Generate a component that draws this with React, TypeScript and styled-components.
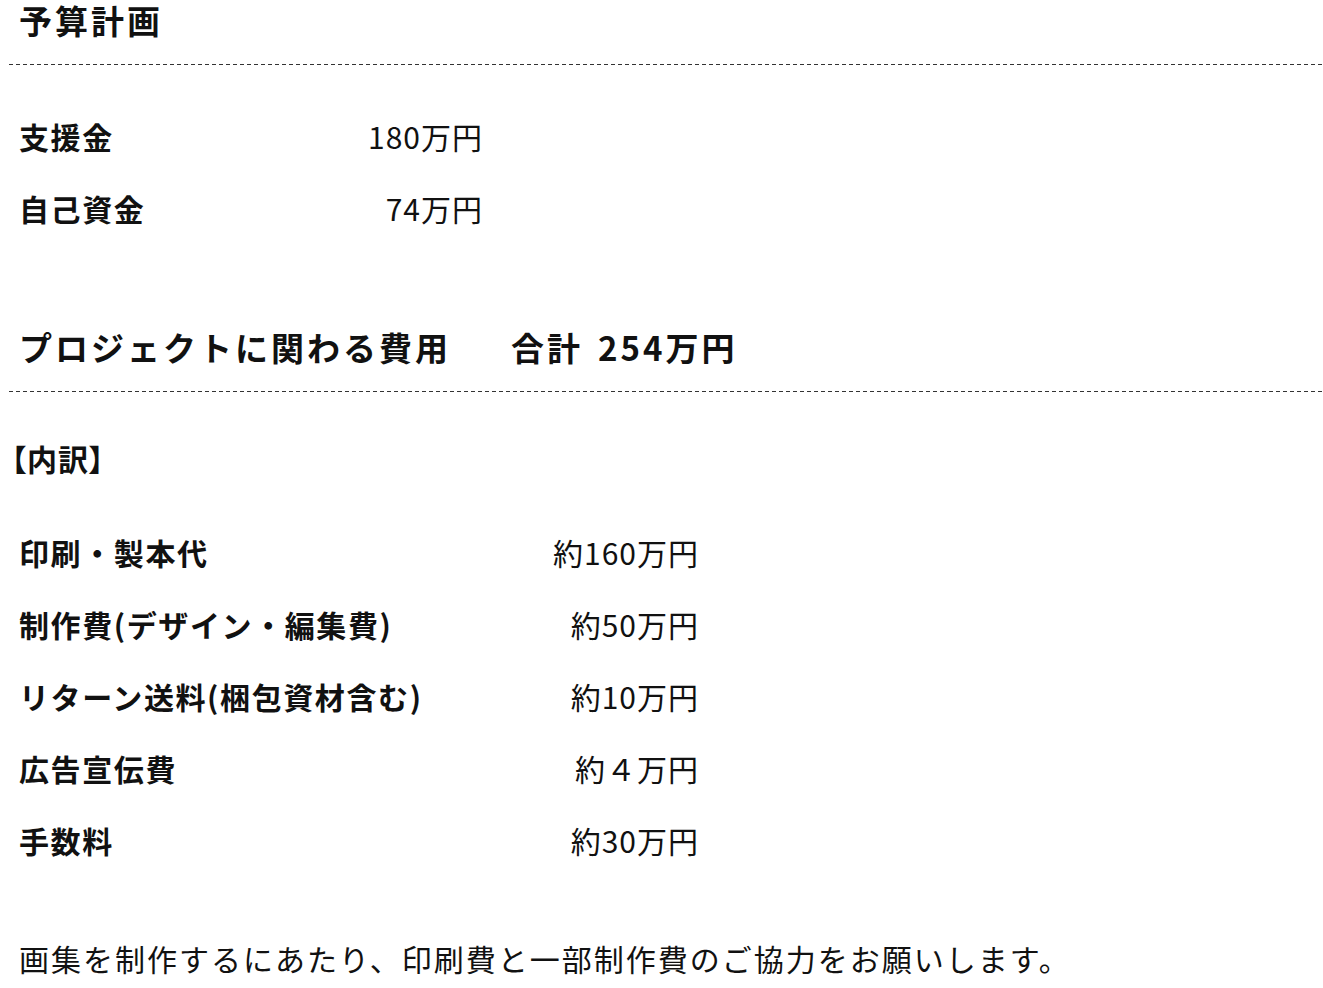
import React from "react";
import styled, { createGlobalStyle } from "styled-components";

const GlobalStyle = createGlobalStyle`
  html, body {
    margin: 0;
    padding: 0;
    background: #ffffff;
    overflow: hidden;
  }
  body {
    font-family: "Noto Sans CJK JP", "Noto Sans", sans-serif;
    color: #111111;
  }
`;

const Page = styled.div`
  padding-left: 9px;
  display: flex;
  flex-direction: column;
`;

const SectionTitle = styled.h2<{ $top?: number }>`
  margin: ${(p) => p.$top ?? 0}px 0 0;
  padding: 0 0 25px 10px;
  height: 40px;
  line-height: 40px;
  font-size: 33px;
  font-weight: 700;
  letter-spacing: 3px;
  background-image: repeating-linear-gradient(
    to right,
    #333333 0 4px,
    transparent 4px 7px
  );
  background-size: 100% 1px;
  background-position: left bottom;
  background-repeat: no-repeat;
  display: flex;
  align-items: center;
`;

const TotalLabel = styled.span`
  margin-left: 60px;
`;

const TotalAmount = styled.span`
  margin-left: 15px;
`;

const Table = styled.div<{ $width: number; $top: number }>`
  width: ${(p) => p.$width}px;
  margin-top: ${(p) => p.$top}px;
  padding-left: 10px;
  display: flex;
  flex-direction: column;
`;

const Row = styled.div`
  display: flex;
  justify-content: space-between;
  align-items: center;
  height: 72px;
  font-size: 30px;
  letter-spacing: 1px;
`;

const Label = styled.span`
  font-weight: 700;
  letter-spacing: 1.6px;
`;

const Amount = styled.span`
  font-weight: 400;
`;

const Note = styled.div`
  margin-top: 30px;
  padding-left: 2px;
  height: 72px;
  line-height: 72px;
  font-size: 30px;
  font-weight: 700;
  letter-spacing: 1px;
  font-feature-settings: "palt";
`;

const Message = styled.p`
  margin: 46px 0 0;
  padding-left: 10px;
  height: 72px;
  line-height: 72px;
  font-size: 30px;
  letter-spacing: 2px;
  white-space: nowrap;
`;

const funding = [
  { label: "支援金", amount: "180万円" },
  { label: "自己資金", amount: "74万円" },
];

const costs = [
  { label: "印刷・製本代", amount: "約160万円" },
  { label: "制作費(デザイン・編集費)", amount: "約50万円" },
  { label: "リターン送料(梱包資材含む)", amount: "約10万円" },
  { label: "広告宣伝費", amount: "約４万円" },
  { label: "手数料", amount: "約30万円" },
];

export default function App() {
  return (
    <Page>
      <GlobalStyle />
      <SectionTitle>予算計画</SectionTitle>
      <Table $width={464} $top={35}>
        {funding.map((f) => (
          <Row key={f.label}>
            <Label>{f.label}</Label>
            <Amount>{f.amount}</Amount>
          </Row>
        ))}
      </Table>
      <SectionTitle $top={83}>
        プロジェクトに関わる費用
        <TotalLabel>合計</TotalLabel>
        <TotalAmount>254万円</TotalAmount>
      </SectionTitle>
      <Note>【内訳】</Note>
      <Table $width={680} $top={22}>
        {costs.map((c) => (
          <Row key={c.label}>
            <Label>{c.label}</Label>
            <Amount>{c.amount}</Amount>
          </Row>
        ))}
      </Table>
      <Message>
        画集を制作するにあたり、印刷費と一部制作費のご協力をお願いします。
      </Message>
    </Page>
  );
}
